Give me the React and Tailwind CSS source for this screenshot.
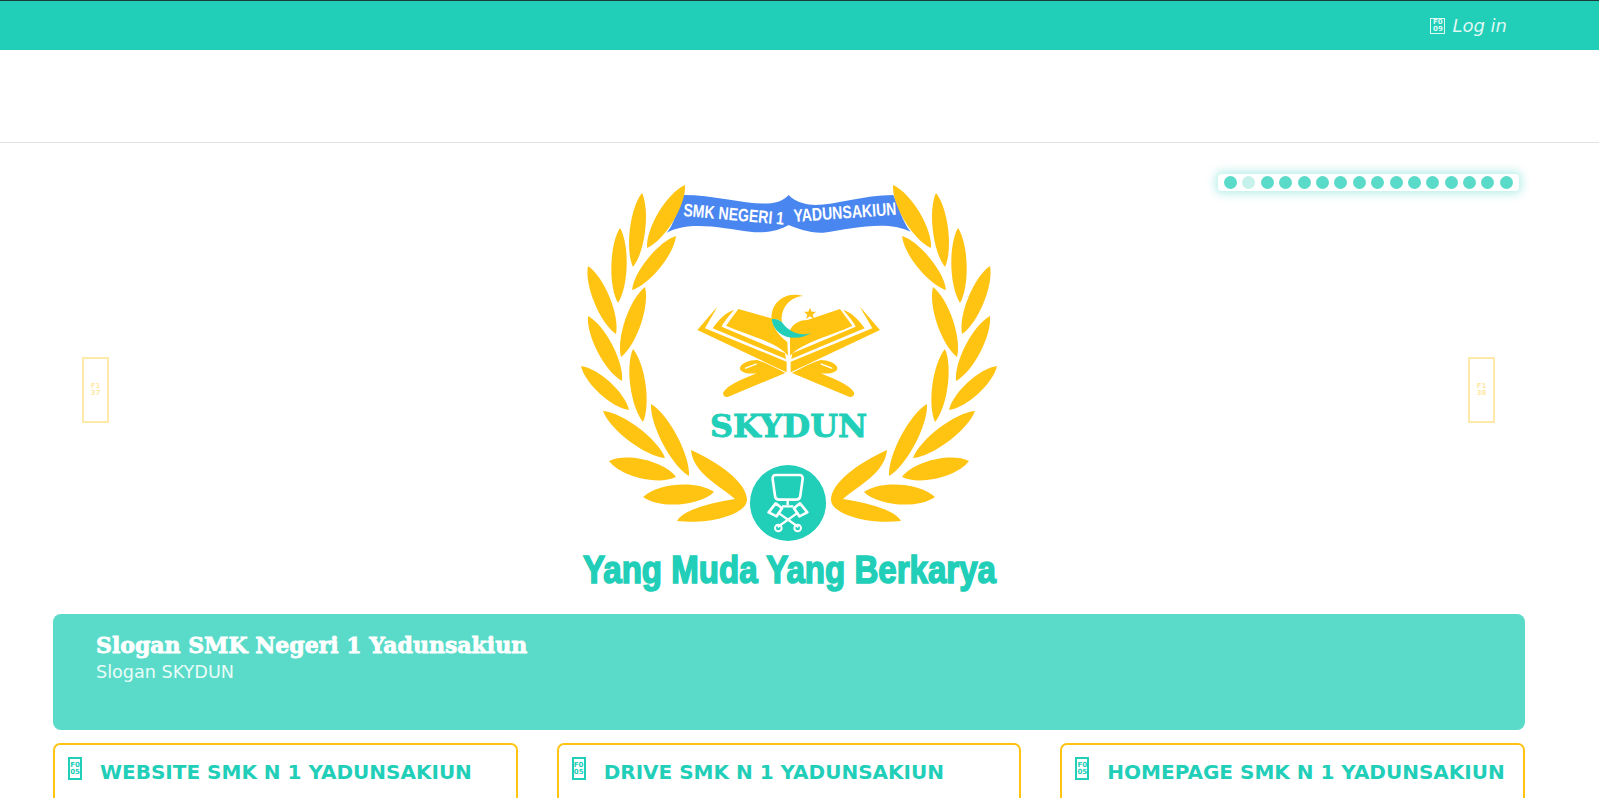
const YELLOW = "#ffc312"
const TEAL = "#21ceb8"

// missing-glyph boxes, the page's icon font did not load
function Tofu({ className, top, bottom }) {
  return (
    <span className={`inline-flex flex-col items-center justify-center shrink-0 border font-['DejaVu_Sans'] text-[7px] leading-[7px] not-italic font-bold ${className}`}>
      <span>{top}</span>
      <span>{bottom}</span>
    </span>
  )
}

function Leaf({ x1, y1, x2, y2, w }) {
  const dx = x2 - x1
  const dy = y2 - y1
  const len = Math.hypot(dx, dy)
  const nx = (-dy / len) * w * 0.6
  const ny = (dx / len) * w * 0.6
  const a = { x: x1 + dx * 0.22, y: y1 + dy * 0.22 }
  const b = { x: x1 + dx * 0.78, y: y1 + dy * 0.78 }
  const d = `M${x1} ${y1}C${a.x + nx} ${a.y + ny} ${b.x + nx} ${b.y + ny} ${x2} ${y2}C${b.x - nx} ${b.y - ny} ${a.x - nx} ${a.y - ny} ${x1} ${y1}Z`
  return <path d={d} fill={YELLOW} />
}

const leaves = [
  { x1: 115, y1: 15, x2: 77, y2: 78, w: 19 },
  { x1: 72, y1: 23, x2: 63, y2: 97, w: 17 },
  { x1: 106, y1: 66, x2: 62, y2: 120, w: 17 },
  { x1: 50, y1: 58, x2: 48, y2: 133, w: 17 },
  { x1: 18, y1: 96, x2: 46, y2: 164, w: 18 },
  { x1: 75, y1: 117, x2: 51, y2: 187, w: 18 },
  { x1: 18, y1: 146, x2: 52, y2: 211, w: 18 },
  { x1: 63, y1: 179, x2: 73, y2: 252, w: 17 },
  { x1: 11, y1: 196, x2: 59, y2: 240, w: 17 },
  { x1: 33, y1: 241, x2: 95, y2: 288, w: 18 },
  { x1: 81, y1: 234, x2: 119, y2: 306, w: 18 },
  { x1: 39, y1: 291, x2: 106, y2: 307, w: 21 },
  { x1: 73, y1: 327, x2: 144, y2: 322, w: 22 },
]

function Wing() {
  return (
    <g>
      {leaves.map((l, i) => <Leaf key={i} {...l} />)}
      <path
        d="M121 280C150 293 177 313 177 330C177 343 143 355 107 351C113 340 140 333 165 329C150 316 123 303 121 280Z"
        fill={YELLOW}
      />
    </g>
  )
}

function BookSide() {
  return (
    <g fill={YELLOW}>
      <path d="M22 135L82 65C72 85 55 110 45 130L290 230L290 262Z" />
      <path d="M68 130C85 105 110 80 132 75C115 95 100 113 95 125L285 205L288 222Z" />
      <path d="M100 322C115 300 150 285 200 265C170 268 150 262 150 250C150 235 180 225 200 225C215 228 260 250 286 264L115 335C105 338 97 332 100 322Z" />
      <path d="M165 250L200 237" stroke="#fff" strokeWidth="4" />
    </g>
  )
}

function Logo() {
  return (
    <svg width="430" height="430" viewBox="0 0 430 430" className="block overflow-visible">
      <g transform="scale(0.3333)">
        <path
          d="M290 188C310 170 325 110 340 75C450 75 560 115 625 95C640 90 650 82 656 75C665 85 680 95 700 100C760 120 860 75 970 75C985 110 1000 160 1022 185C950 150 850 175 760 188C720 190 680 175 656 165C630 180 590 192 540 185C460 175 360 150 290 188Z"
          fill="#4a86f0"
        />
      </g>
      <text x="113" y="46" transform="rotate(5 113 46)" textLength="101" lengthAdjust="spacingAndGlyphs" fill="#fff" fontFamily="Liberation Sans" fontWeight="700" fontSize="18">SMK NEGERI 1</text>
      <text x="224" y="52" transform="rotate(-4 224 52)" textLength="103" lengthAdjust="spacingAndGlyphs" fill="#fff" fontFamily="Liberation Sans" fontWeight="700" fontSize="18">YADUNSAKIUN</text>

      <Wing />
      <g transform="translate(438 0) scale(-1 1)"><Wing /></g>

      {/* open book, crescent and star */}
      <g transform="translate(120 115) scale(0.3333)">
        <BookSide />
        <g transform="translate(592 0) scale(-1 1)"><BookSide /></g>
        <path d="M145 72L245 100C250 140 280 160 292 172L294 212C260 170 170 150 108 122Z" fill={YELLOW} />
        <path d="M300 135C310 115 330 105 352 105L450 72L487 122C430 150 340 170 300 212Z" fill={YELLOW} />
        <path d="M340 33C280 15 240 60 245 103C258 100 268 105 276 112C270 70 300 35 340 33Z" fill={YELLOW} />
        <path d="M245 103C250 150 310 180 370 140C335 160 295 140 276 112C268 105 258 100 245 103Z" fill={TEAL} />
        <path d="M360 68L365 80L378 80L368 89L372 102L360 94L348 102L352 89L342 80L355 80Z" fill={YELLOW} />
      </g>

      <text x="140" y="267" textLength="157" lengthAdjust="spacingAndGlyphs" fill={TEAL} stroke={TEAL} strokeWidth="0.9" fontFamily="DejaVu Serif" fontWeight="700" fontSize="32">SKYDUN</text>

      {/* badge with monitor and crossed pistons */}
      <circle cx="218" cy="333" r="38" fill={TEAL} />
      <g transform="translate(160 285) scale(0.3333)" fill="none" stroke="#fff" strokeLinejoin="round">
        <path d="M138 60H208Q219 60 218 72L211 122Q210 134 198 134H148Q136 134 135 122L128 72Q127 60 138 60Z" strokeWidth="8" />
        <path d="M173 136V150M156 154H190" strokeWidth="7" />
        <path d="M137 145L116 172L140 184L156 160Z" strokeWidth="8" />
        <path d="M210 145L232 172L208 184L192 160Z" strokeWidth="8" />
        <path d="M143 172L205 216M205 172L143 216" strokeWidth="7" />
        <circle cx="145" cy="219" r="10" strokeWidth="6" />
        <circle cx="203" cy="219" r="10" strokeWidth="6" />
      </g>

      <text x="13" y="413" textLength="413" lengthAdjust="spacingAndGlyphs" fill={TEAL} stroke={TEAL} strokeWidth="1.6" fontFamily="Liberation Sans" fontWeight="700" fontSize="38">Yang Muda Yang Berkarya</text>
    </svg>
  )
}

function Arrow({ className, top, bottom }) {
  return (
    <div className={`absolute top-[214px] w-[27px] h-[66px] border-2 border-[#ffe9a8] flex items-center justify-center ${className}`}>
      <span className="flex flex-col items-center text-[7px] leading-[7px] font-bold text-[#ffe9a8] font-['DejaVu_Sans']">
        <span>{top}</span>
        <span>{bottom}</span>
      </span>
    </div>
  )
}

const dots = Array.from({ length: 16 }, (_, i) => i)

const cards = [
  { title: "WEBSITE SMK N 1 YADUNSAKIUN", top: "F0", bottom: "05" },
  { title: "DRIVE SMK N 1 YADUNSAKIUN", top: "F0", bottom: "05" },
  { title: "HOMEPAGE SMK N 1 YADUNSAKIUN", top: "F0", bottom: "05" },
]

export default function App() {
  return (
    <div className="h-screen overflow-hidden bg-white font-['DejaVu_Sans',sans-serif]">
      <div className="h-[50px] bg-[#21ceb8] border-t border-[#1b3a3a] flex items-center justify-end pr-[92px]">
        <a className="flex items-center gap-[7px] text-[18px] italic text-[#dff8f4]">
          <Tofu className="w-[15px] h-[16px] border-[#dff8f4] text-[#dff8f4]" top="F0" bottom="09" />
          Log in
        </a>
      </div>

      <div className="h-[93px] border-b border-[#e3e3e3]" />

      <div className="pl-[53px] pr-[74px]">
        {/* carousel */}
        <div className="relative h-[471px] flex justify-center">
          <div className="pt-[27px] pr-[8px]">
            <Logo />
          </div>
          <Arrow className="left-[29px]" top="F1" bottom="37" />
          <Arrow className="right-[30px]" top="F1" bottom="38" />
          <div className="absolute top-[31px] right-[6px] w-[301px] h-[17px] bg-white rounded-[4px] shadow-[0_0_8px_3px_rgba(33,206,184,0.3)] flex items-center justify-between px-[6px]">
            {dots.map(i => (
              <span key={i} className={`w-[13px] h-[13px] rounded-full ${i === 1 ? "bg-[#c6f2eb]" : "bg-[#5adbc9]"}`} />
            ))}
          </div>
        </div>

        {/* slogan */}
        <div className="h-[116px] bg-[#5adbc9] rounded-[8px] pl-[43px] pt-[17px] text-white">
          <h2 className="text-[22px] leading-[28px] font-bold font-['DejaVu_Serif',serif] [-webkit-text-stroke:0.8px_white]">
            Slogan SMK Negeri 1 Yadunsakiun
          </h2>
          <p className="text-[17.6px] leading-[24px] text-[#eafbf8] mt-[1px]">Slogan SKYDUN</p>
        </div>

        {/* link cards */}
        <div className="grid grid-cols-3 gap-[39px] mt-[13px]">
          {cards.map(card => (
            <div key={card.title} className="h-[120px] border-2 border-[#ffc312] rounded-[7px] pl-[13px] pt-[12px] flex items-start gap-[18px]">
              <Tofu className="w-[14px] h-[23px] border-2 border-[#21ceb8] text-[#21ceb8]" top={card.top} bottom={card.bottom} />
              <h3 className="text-[20px] leading-[28px] mt-[1px] font-bold text-[#21ceb8] whitespace-nowrap">{card.title}</h3>
            </div>
          ))}
        </div>
      </div>
    </div>
  )
}
